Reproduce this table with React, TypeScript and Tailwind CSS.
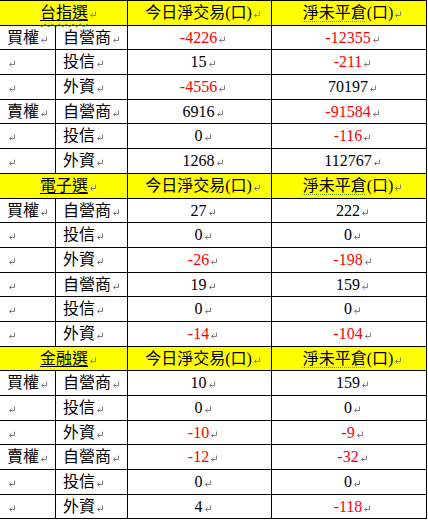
import type React from "react"

type Row = {
  side: string
  who: string
  today: number
  open: number
}

type Section = {
  title: string
  squiggle?: boolean
  rows: Row[]
}

const sections: Section[] = [
  {
    title: "台指選",
    squiggle: true,
    rows: [
      { side: "買權", who: "自營商", today: -4226, open: -12355 },
      { side: "", who: "投信", today: 15, open: -211 },
      { side: "", who: "外資", today: -4556, open: 70197 },
      { side: "賣權", who: "自營商", today: 6916, open: -91584 },
      { side: "", who: "投信", today: 0, open: -116 },
      { side: "", who: "外資", today: 1268, open: 112767 },
    ],
  },
  {
    title: "電子選",
    rows: [
      { side: "買權", who: "自營商", today: 27, open: 222 },
      { side: "", who: "投信", today: 0, open: 0 },
      { side: "", who: "外資", today: -26, open: -198 },
      { side: "", who: "自營商", today: 19, open: 159 },
      { side: "", who: "投信", today: 0, open: 0 },
      { side: "", who: "外資", today: -14, open: -104 },
    ],
  },
  {
    title: "金融選",
    rows: [
      { side: "買權", who: "自營商", today: 10, open: 159 },
      { side: "", who: "投信", today: 0, open: 0 },
      { side: "", who: "外資", today: -10, open: -9 },
      { side: "賣權", who: "自營商", today: -12, open: -32 },
      { side: "", who: "投信", today: 0, open: 0 },
      { side: "", who: "外資", today: 4, open: -118 },
    ],
  },
]

// Word paragraph mark
function Mark() {
  return (
    <svg width="8" height="7" viewBox="0 0 8 7" className="inline-block ml-[1px] align-[0px]">
      <path d="M6.5 0.5 V4.5 H1.5" fill="none" stroke="#808080" strokeWidth="1" />
      <path d="M3.5 2.5 L1.5 4.5 L3.5 6.5" fill="none" stroke="#808080" strokeWidth="1" />
    </svg>
  )
}

const rowCls = "flex h-[24.7px]"
const cell = "border-r border-b border-black whitespace-nowrap leading-[23px] shrink-0"

function Num({ value, w }: { value: number; w: string }) {
  return (
    <div className={`${cell} ${w} pl-[7px] text-center`}>
      <span className={value < 0 ? "text-[#ff0000]" : "text-black"}>{value}</span>
      <Mark />
    </div>
  )
}

function Header({ section }: { section: Section }) {
  const label = section.squiggle ? (
    <span className="underline decoration-wavy decoration-[#5ea32b] underline-offset-[5px] decoration-1">
      <span className="underline decoration-black underline-offset-[2px] decoration-1">{section.title}</span>
    </span>
  ) : (
    <span className="underline decoration-black underline-offset-[2px] decoration-1">{section.title}</span>
  )
  return (
    <div className={`${rowCls} bg-[#ffff00]`}>
      <div className={`${cell} w-[128px] flex`}>
        <div className="w-[40px] shrink-0" />
        <div>
          {label}
          <Mark />
        </div>
      </div>
      <div className={`${cell} w-[144px] pl-[7px] text-center`}>
        今日淨交易(口)
        <Mark />
      </div>
      <div className={`${cell} w-[155px] pl-[7px] text-center`}>
        <span className="underline decoration-dotted decoration-[#5ea32b] underline-offset-[3px] decoration-1">淨未平倉</span>
        (口)
        <Mark />
      </div>
    </div>
  )
}

export default function App() {
  return (
    <div
      className="w-[428px] h-[520px] bg-white text-black text-[16px]"
      style={{ fontFamily: '"Liberation Serif", "Noto Sans CJK TC", serif' } as React.CSSProperties}
    >
      <div className="w-[427px] border-t border-black">
        {sections.map((s) => (
          <div key={s.title}>
            <Header section={s} />
            {s.rows.map((r, i) => (
              <div key={i} className={rowCls}>
                <div className={`${cell} w-[56px] pl-[7px]`}>
                  {r.side}
                  <Mark />
                </div>
                <div className={`${cell} w-[72px] pl-[7px]`}>
                  {r.who}
                  <Mark />
                </div>
                <Num value={r.today} w="w-[144px]" />
                <Num value={r.open} w="w-[155px]" />
              </div>
            ))}
          </div>
        ))}
      </div>
    </div>
  )
}
